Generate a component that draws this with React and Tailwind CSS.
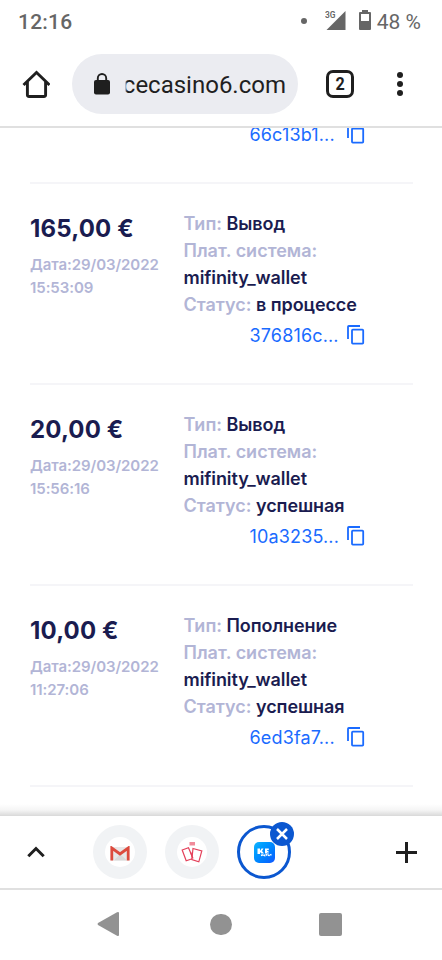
import React from 'react';
import clsx from 'clsx';

const transactions = [
    { id: '376816c...', amount: '165,00 €', date: '29/03/2022', time: '15:53:09', type: 'Вывод', system: 'mifinity_wallet', status: 'в процессе' },
    { id: '10a3235...', amount: '20,00 €', date: '29/03/2022', time: '15:56:16', type: 'Вывод', system: 'mifinity_wallet', status: 'успешная' },
    { id: '6ed3fa7...', amount: '10,00 €', date: '29/03/2022', time: '11:27:06', type: 'Пополнение', system: 'mifinity_wallet', status: 'успешная' },
];

const CopyIcon = () => (
    <svg className="-mt-[2px]" width="18" height="20" viewBox="0 0 18 20" fill="none" stroke="#1a6bff" strokeWidth="1.8">
        <path d="M1 14V1.8Q1 1 1.8 1H13" />
        <rect x="5" y="4.6" width="11.2" height="14" rx="0.8" />
    </svg>
);

const TransactionId = ({ value, className }) => (
    <div className={clsx('flex h-[27px] items-center pl-[66px] text-[18px] text-[#1a6bff]', className)}>
        <span className="w-[97px] whitespace-nowrap tracking-[0.15px]">{value}</span>
        <CopyIcon />
    </div>
);

const Field = ({ label, children }) => (
    <p><span className="tracking-normal text-[#b2b5d6]">{label}:</span> {children}</p>
);

const Transaction = ({ item }) => (
    <div className="flex h-[201px] w-[383px] shrink-0 border-b-2 border-[#f5f5f8] pt-[26px]">
        <div className="w-[153.5px] shrink-0">
            <div className="mt-[3px] text-[24px] leading-[32px] font-bold tracking-[0.15px] text-[#1a1c50]">{item.amount}</div>
            <div className="mt-[8px] text-[15px] leading-[23px] font-semibold tracking-[-0.07px] text-[#b2b5d6]">
                <p>Дата:{item.date}</p>
                <p>{item.time}</p>
            </div>
        </div>
        <div className="flex-1 text-[18px] leading-[27px] font-semibold tracking-[-0.08px] text-[#1a1c50]">
            <Field label="Тип">{item.type}</Field>
            <Field label="Плат. система"><br />{item.system}</Field>
            <Field label="Статус">{item.status}</Field>
            <TransactionId value={item.id} className="mt-[4px] font-normal" />
        </div>
    </div>
);

const StatusBar = () => (
    <div className="flex h-[42px] items-center pt-[3px] pr-[21px] pl-[18px] text-[21px] text-[#666]">
        <span className="font-medium tracking-[0.2px]">12:16</span>
        <div className="-mt-[4px] ml-auto h-[6px] w-[6px] rounded-full bg-[#666]" />
        <svg className="-mt-[5px] ml-[18px]" width="21" height="22" viewBox="0 0 21 22" fill="#666">
            <path d="M1.500 21L20.500 2V21Z" />
            <rect width="11.500" height="9" fill="#fff" />
            <text x="0" y="8.500" fontSize="9.5" fontFamily="Roboto" fontWeight="600" letterSpacing="0" textLength="10.5" lengthAdjust="spacingAndGlyphs">3G</text>
        </svg>
        <svg className="-mt-[5px] ml-[13px]" width="12" height="20" viewBox="0 0 12 20">
            <path d="M1 2H3V0H9V2H11Q12 2 12 3V19Q12 20 11 20H1Q0 20 0 19V3Q0 2 1 2Z" fill="#666" />
            <path d="M2 4H10V11H2Z" fill="#fff" />
        </svg>
        <span className="ml-[6px]">48 %</span>
    </div>
);

const Toolbar = () => (
    <div className="flex h-[86px] items-center border-b-2 border-[#e0e0e0] text-[#1f1f1f]">
        <svg className="ml-[22px]" width="28" height="28" viewBox="0 0 28 28" fill="none" stroke="currentColor" strokeWidth="2.9">
            <path d="M1.5 15L14.5 2.400L27.500 15" />
            <path d="M5.4 12V24.8Q5.400 26.500 7.100 26.500H21.900Q23.600 26.500 23.600 24.800V12" />
        </svg>
        <div className="ml-[22px] flex h-[60px] w-[226px] items-center rounded-full bg-[#ebecf1] pl-[22px]">
            <svg width="16" height="22" viewBox="0 0 16 22">
                <rect y="7" width="16" height="14.500" rx="2" fill="currentColor" />
                <path d="M3.800 8V5.200A4.200 4.200 0 0 1 12.200 5.200V8" fill="none" stroke="currentColor" strokeWidth="1.900" />
            </svg>
            {/* long host names fade out on the left */}
            <div className="relative mt-[2px] ml-[14px] flex w-[162px] justify-end text-[24px] leading-[32px] whitespace-nowrap">
                <span>cecasino6.com</span>
                <div className="absolute top-0 left-[-4px] h-full w-[7px] bg-linear-to-r from-[#ebecf1] from-70% to-transparent" />
            </div>
        </div>
        <div className="ml-[28px] flex h-[28px] w-[28px] items-center justify-center rounded-[7px] border-[3px] border-current text-[18px] font-bold">
            <span className="-mt-[1px] scale-x-90">2</span>
        </div>
        <div className="ml-[43px] flex flex-col gap-[3px]">
            <i className="h-[6px] w-[6px] rounded-full bg-current" />
            <i className="h-[6px] w-[6px] rounded-full bg-current" />
            <i className="h-[6px] w-[6px] rounded-full bg-current" />
        </div>
    </div>
);

const TabIcon = ({ children }) => (
    <div className="flex h-[54px] w-[54px] items-center justify-center rounded-full bg-[#f1f3f5]">
        <div className="flex h-[30px] w-[30px] items-center justify-center rounded-full bg-white">{children}</div>
    </div>
);

const TabStrip = () => (
    <div className="relative flex h-[74px] shrink-0 items-center border-b-2 border-[#e0e0e0] bg-white">
        {/* shadow over the page */}
        <div className="absolute -top-[12px] left-0 h-[12px] w-full bg-linear-to-b from-transparent via-black/4 to-black/15" />
        <svg className="ml-[27px]" width="18" height="12" viewBox="0 0 18 12" fill="none" stroke="#1f1f1f" strokeWidth="3">
            <path d="M1.300 10.200L9 2.500L16.700 10.200" />
        </svg>
        <div className="ml-[48px]">
            <TabIcon>
                <svg className="mt-[2px]" width="20" height="15" viewBox="0 0 20 15">
                    <path d="M1 1H19V14.500H1Z" fill="#e8e8e8" />
                    <path d="M10 8L17 14.500H4Z" fill="#d9d9d9" />
                    <path d="M1.800 14.500V2L10 8L18.200 2V14.500" fill="none" stroke="#dc4b3e" strokeWidth="2.800" />
                </svg>
            </TabIcon>
        </div>
        <div className="ml-[18px]">
            <TabIcon>
                <svg width="22" height="22" viewBox="0 0 22 22" fill="none" stroke="#e4405a" strokeWidth="1.200">
                    <path d="M8.500 1H14V4.500H8.500Z" fill="#f08b9a" stroke="none" />
                    <path d="M1.200 9L7.500 6.800L12 17.500L5.200 19.800Z" />
                    <path d="M12 7.500L20.800 10L17.800 20.800L10.800 18.500Z" fill="#fff" />
                    <path d="M9.500 11L12 17.500" />
                </svg>
            </TabIcon>
        </div>
        <div className="relative ml-[18px] flex h-[54px] w-[54px] items-center justify-center rounded-full border-[3px] border-[#0b57d0]">
            <div className="flex h-[21px] w-[21px] flex-col items-center justify-center rounded-[5px] bg-linear-to-br from-[#16b5ff] to-[#1456ff] text-white">
                <svg width="15" height="9" viewBox="0 0 15 9" fill="#fff">
                    <path d="M0.500 0.500H3V3L4.500 0.500H6.500L5 3L7 5.500H4.500L3 4V6H0.500Z" />
                    <path d="M8 0.500H11.800V2H10V2.700H11.500V4H10V4.500H11.800V5.500H8Z" />
                    <path d="M4 7.500L6 6.800L8 7.600L10 6.600L12 7.500L14.500 6.500" fill="none" stroke="#fff" strokeWidth="1.600" strokeDasharray="2 0.500" />
                </svg>
            </div>
            <div className="absolute -top-[6px] -right-[6px] flex h-[24px] w-[24px] items-center justify-center rounded-full bg-[#0b57d0]">
                <svg className="-mt-[1px]" width="12" height="12" viewBox="0 0 12 12" stroke="#fff" strokeWidth="2.500">
                    <path d="M1 1L11 11M11 1L1 11" />
                </svg>
            </div>
        </div>
        <svg className="ml-auto mr-[25px]" width="21" height="21" viewBox="0 0 21 21" stroke="#1f1f1f" strokeWidth="3">
            <path d="M0 10.500H21M10.500 0V21" />
        </svg>
    </div>
);

const NavBar = () => (
    <div className="flex h-[70px] shrink-0 items-center bg-white pl-[97px]">
        <svg className="-mt-[2px]" width="23" height="26" viewBox="0 0 23 26" fill="#929292">
            <path d="M1 12L20 1.200Q22 0.500 22 2V24Q22 25.500 20 24.800L1 14Q0 13 1 12Z" />
        </svg>
        <div className="-mt-[2px] ml-[90px] h-[21px] w-[22px] rounded-full bg-[#929292]" />
        <div className="-mt-[2px] ml-[87px] h-[23px] w-[23px] rounded-[2px] bg-[#929292]" />
    </div>
);

const App = () => (
    <div className="flex h-[960px] w-[442px] flex-col overflow-hidden bg-white font-['Roboto',sans-serif]">
        <StatusBar />
        <Toolbar />
        <div className="flex h-[688px] shrink-0 flex-col overflow-hidden px-[30px] font-['Inter',sans-serif]">
            <div className="h-[56px] w-[383px] shrink-0 border-b-2 border-[#f5f5f8] pl-[153.5px]">
                <TransactionId value="66c13b1..." className="-mt-[7px]" />
            </div>
            {transactions.map((item) => (
                <Transaction key={item.id} item={item} />
            ))}
        </div>
        <TabStrip />
        <NavBar />
    </div>
);

export default App;
